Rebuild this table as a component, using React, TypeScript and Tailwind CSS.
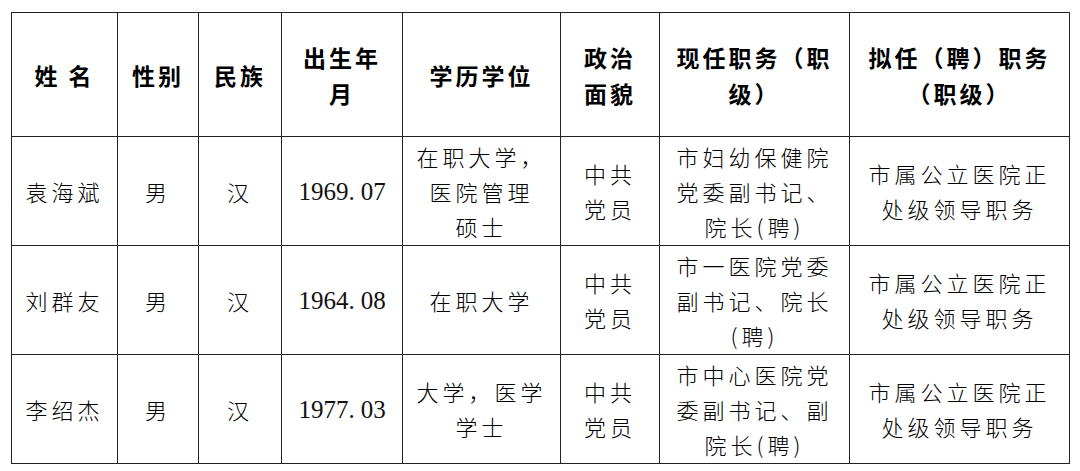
const cjk = '"Noto Sans CJK SC", "Noto Sans", sans-serif';
const num = '"Liberation Serif", "Noto Sans CJK SC", serif';

const widths = ['w-[106px]', 'w-[81px]', 'w-[83px]', 'w-[121px]', 'w-[158px]', 'w-[99px]', 'w-[190px]', 'w-[220px]'];

const headers: string[][] = [
  ['姓 名'],
  ['性别'],
  ['民族'],
  ['出生年', '月'],
  ['学历学位'],
  ['政治', '面貌'],
  ['现任职务（职', '级）'],
  ['拟任（聘）职务', '（职级）'],
];

const rows: string[][][] = [
  [
    ['袁海斌'],
    ['男'],
    ['汉'],
    ['1969.07'],
    ['在职大学，', '医院管理', '硕士'],
    ['中共', '党员'],
    ['市妇幼保健院', '党委副书记、', '院长(聘)'],
    ['市属公立医院正', '处级领导职务'],
  ],
  [
    ['刘群友'],
    ['男'],
    ['汉'],
    ['1964.08'],
    ['在职大学'],
    ['中共', '党员'],
    ['市一医院党委', '副书记、院长', '(聘)'],
    ['市属公立医院正', '处级领导职务'],
  ],
  [
    ['李绍杰'],
    ['男'],
    ['汉'],
    ['1977.03'],
    ['大学，医学', '学士'],
    ['中共', '党员'],
    ['市中心医院党', '委副书记、副', '院长(聘)'],
    ['市属公立医院正', '处级领导职务'],
  ],
];

function Lines({ lines }: { lines: string[] }) {
  return (
    <>
      {lines.map((l, i) => (
        <div key={i} className="whitespace-nowrap">
          {l}
        </div>
      ))}
    </>
  );
}

// the date column uses a half-width period with a gap after it
function DateText({ value }: { value: string }) {
  const [y, m] = value.split('.');
  return (
    <span>
      {y}
      <span className="mr-[6px]">.</span>
      {m}
    </span>
  );
}

export default function App() {
  return (
    <div className="min-h-[471px] w-[1080px] bg-white pl-[11px] pt-[12px]">
      <table className="w-[1059px] table-fixed border-collapse text-black">
        <colgroup>
          {widths.map((w, i) => (
            <col key={i} className={w} />
          ))}
        </colgroup>
        <thead>
          <tr className="h-[124px]">
            {headers.map((h, i) => (
              <th
                key={i}
                className="border border-[#222] p-0 text-center align-middle text-[23px] font-bold leading-[36px] tracking-[3px]"
                style={{ fontFamily: cjk }}
              >
                <Lines lines={h} />
              </th>
            ))}
          </tr>
        </thead>
        <tbody>
          {rows.map((r, ri) => (
            <tr key={ri} className="h-[109px]">
              {r.map((c, ci) => (
                <td
                  key={ci}
                  className={
                    ci === 3
                      ? 'border border-[#222] p-0 text-center align-middle text-[25px] font-normal leading-[35px] text-[#111]'
                      : 'border border-[#222] p-0 text-center align-middle text-[22px] font-light leading-[35px] tracking-[4px] text-black'
                  }
                  style={{ fontFamily: ci === 3 ? num : cjk }}
                >
                  {ci === 3 ? <DateText value={c[0]} /> : <Lines lines={c} />}
                </td>
              ))}
            </tr>
          ))}
        </tbody>
      </table>
    </div>
  );
}
